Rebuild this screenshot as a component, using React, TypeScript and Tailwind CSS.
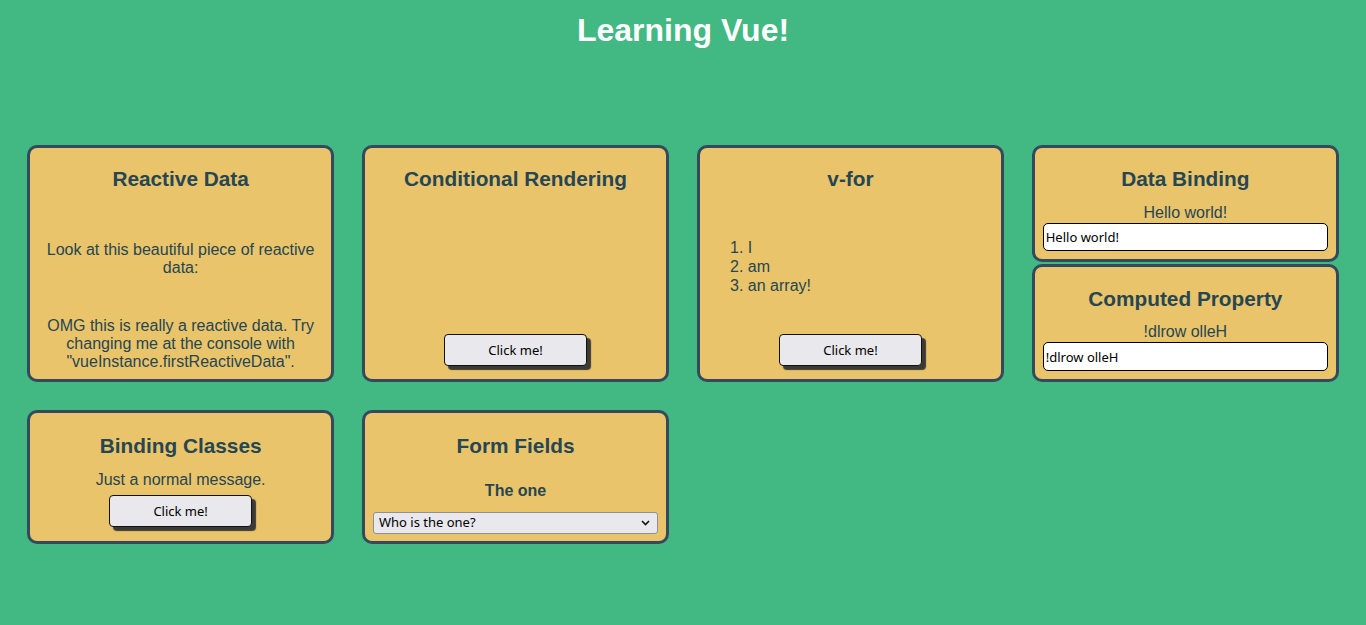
import React from "react";

const Btn = ({ className = "" }: { className?: string }) => (
  <button
    className={`w-[143px] h-[32px] bg-[#e9e8ed] border border-[#111] rounded-[4px] shadow-[4px_4px_1px_#3b3a34] text-[13px] leading-[30px] text-black font-['Noto_Sans',sans-serif] ${className}`}
  >
    Click me!
  </button>
);

const Title = ({ children }: { children: React.ReactNode }) => (
  <h2 className="text-[20.8px] leading-[24px] font-bold text-center">{children}</h2>
);

const card =
  "bg-[#e9c46a] border-[3px] border-[#35495e] rounded-[10px] flex flex-col px-2 text-[#264653] font-['Liberation_Sans',Arial,sans-serif]";

export default function App() {
  return (
    <div className="min-h-[625px] bg-[#42b883] font-['Liberation_Sans',Arial,sans-serif]">
      <h1 className="pt-[12px] text-center text-white text-[32px] leading-[37px] font-bold">
        Learning Vue!
      </h1>
      <div className="mt-[96px] grid grid-cols-4 gap-x-[27.67px] gap-y-[28px] pl-[27px] pr-[27px]">
        <div className={`${card} h-[237px] pt-[19px] pb-[9px]`}>
          <Title>Reactive Data</Title>
          <p className="mt-[50px] text-[16px] leading-[18px] text-center">
            Look at this beautiful piece of reactive data:
          </p>
          <p className="mt-[40px] text-[16px] leading-[18px] text-center">
            OMG this is really a reactive data. Try changing me at the console with
            "vueInstance.firstReactiveData".
          </p>
        </div>

        <div className={`${card} h-[237px] pt-[19px] pb-[13px] items-center`}>
          <Title>Conditional Rendering</Title>
          <Btn className="mt-auto" />
        </div>

        <div className={`${card} h-[237px] pt-[19px] pb-[13px]`}>
          <Title>v-for</Title>
          <ol className="mt-[47px] pl-10 list-decimal text-[16px] leading-[19px]">
            <li>I</li>
            <li>am</li>
            <li>an array!</li>
          </ol>
          <Btn className="mt-auto self-center" />
        </div>

        <div className="h-[237px] flex flex-col gap-[2px]">
          <div className={`${card} h-[117px] pt-[19px]`}>
            <Title>Data Binding</Title>
            <p className="mt-[13px] text-[16px] leading-[18px] text-center">Hello world!</p>
            <input
              readOnly
              value="Hello world!"
              className="mt-[1px] h-[28px] w-full bg-white border border-black rounded-[5px] px-[2px] text-[13px] text-black font-['Noto_Sans',sans-serif] outline-none"
            />
          </div>
          <div className={`${card} h-[118px] pt-[20px]`}>
            <Title>Computed Property</Title>
            <p className="mt-[12px] text-[16px] leading-[18px] text-center">!dlrow olleH</p>
            <input
              readOnly
              value="!dlrow olleH"
              className="mt-[1px] h-[29px] w-full bg-white border border-black rounded-[5px] px-[2px] text-[13px] text-black font-['Noto_Sans',sans-serif] outline-none"
            />
          </div>
        </div>

        <div className={`${card} h-[134px] pt-[21px] items-center`}>
          <Title>Binding Classes</Title>
          <p className="mt-[13px] text-[16px] leading-[18px] text-center">Just a normal message.</p>
          <Btn className="mt-[6px]" />
        </div>

        <div className={`${card} h-[134px] pt-[21px]`}>
          <Title>Form Fields</Title>
          <p className="mt-[24px] text-[16px] leading-[18px] text-center font-bold">The one</p>
          <div className="relative mt-[12px]">
            <select className="block appearance-none w-full h-[22px] bg-[#e9e8ed] border border-[#8f8f9d] rounded-[3px] pl-[5px] text-[13px] text-black font-['Noto_Sans',sans-serif] outline-none">
              <option>Who is the one?</option>
            </select>
            <svg
              className="absolute right-[8px] top-[8px] pointer-events-none"
              width="9"
              height="6"
              viewBox="0 0 9 6"
            >
              <path d="M1 1 L4.5 4.5 L8 1" fill="none" stroke="#111" strokeWidth="1.6" />
            </svg>
          </div>
        </div>
      </div>
    </div>
  );
}
